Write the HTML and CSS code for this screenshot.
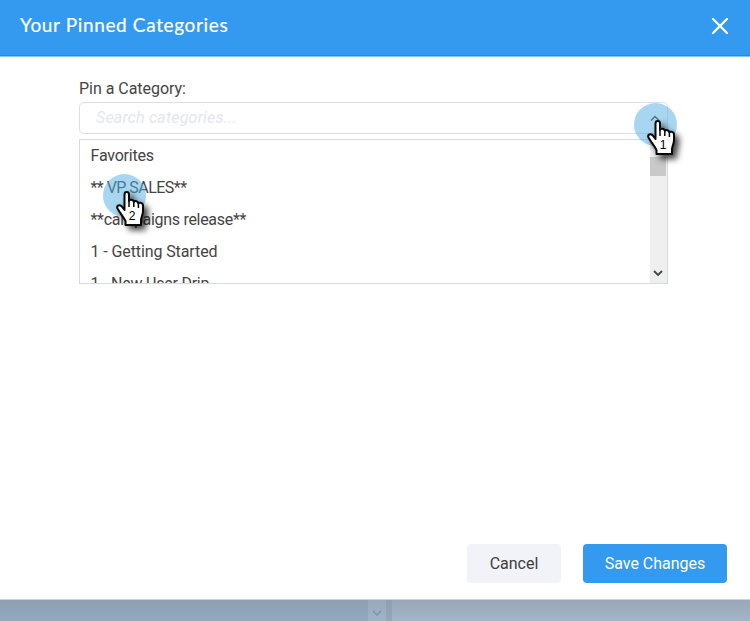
FILE: index.html
```html
<!DOCTYPE html>
<html lang="en">
<head>
<meta charset="utf-8">
<title>Your Pinned Categories</title>
<link rel="stylesheet" href="styles.css">
</head>
<body>
<svg class="defs" width="0" height="0" aria-hidden="true">
  <symbol id="hand" viewBox="0 0 30 36">
    <path d="M8.5 19V3.5C8.5 .3 13 .3 13 3.5V10C13.5 8.2 17.5 8.2 17.8 11C18.8 9.4 22 10 22.4 12.3C23.6 11 27 11.8 27 14.5V20C27 24 25 26.5 25 29V34H9.5V30C7.8 26.5 4 22 1.5 17.5C.2 14.6 3.5 13.2 5.5 15.2Z" fill="#fff" stroke="#080808" stroke-width="2" stroke-linejoin="round"/>
    <path d="M13 9V16M17.8 10.5V16M22.4 12V17" fill="none" stroke="#080808" stroke-width="1.5"/>
  </symbol>
</svg>
<section class="modal">
  <header class="header">
    <h1 class="title">Your Pinned Categories</h1>
    <svg class="close" width="18" height="18" viewBox="0 0 18 18"><path d="M2 2L16 16M16 2L2 16" fill="none" stroke="#fff" stroke-width="2.3" stroke-linecap="round"/></svg>
  </header>
  <main class="content">
    <div class="label"><span>Pin a Category:</span></div>
    <div class="search">
      <span class="placeholder">Search categories...</span>
      <svg width="10" height="7" viewBox="0 0 10 7"><path d="M1 5.5L5 1.5L9 5.5" fill="none" stroke="#444" stroke-width="1.5"/></svg>
      <div class="pointer pointer-one"><svg class="hand" width="30" height="36"><use href="#hand"/></svg><span class="number">1</span></div>
    </div>
    <div class="dropdown">
      <ul class="options">
        <li class="favorites">Favorites</li>
        <li class="sales">** VP SALES**</li>
        <li class="campaigns">**campaigns release**</li>
        <li class="getting">1 - Getting Started</li>
        <li class="drip">1 - New User Drip</li>
      </ul>
      <div class="scrollbar">
        <div class="thumb"></div>
        <svg width="10" height="7" viewBox="0 0 10 7"><path d="M1 1L5 5L9 1" fill="none" stroke="#444" stroke-width="1.8"/></svg>
      </div>
      <div class="pointer pointer-two"><svg class="hand" width="30" height="36"><use href="#hand"/></svg><span class="number">2</span></div>
    </div>
  </main>
  <footer class="footer">
    <button class="button cancel"><span>Cancel</span></button>
    <button class="button save"><span>Save Changes</span></button>
  </footer>
</section>
<div class="backdrop">
  <div class="left"></div>
  <div class="track"><svg width="10" height="7" viewBox="0 0 10 7"><path d="M1 1L5 5L9 1" fill="none" stroke="#8195a8" stroke-width="1.5"/></svg></div>
  <div class="gap"></div>
  <div class="right"></div>
</div>
</body>
</html>
```
FILE: styles.css
```css
* { box-sizing: border-box; }
body {
  margin: 0;
  width: 750px;
  height: 621px;
  overflow: hidden;
  display: flex;
  flex-direction: column;
  font: 16px/20px Roboto, "Liberation Sans", sans-serif;
  color: #444;
}
.defs { position: absolute; }
.modal {
  height: 600px;
  flex: none;
  display: flex;
  flex-direction: column;
  background: #fff;
  border-bottom: 1px solid #cbd5df;
}
.header {
  height: 57px;
  flex: none;
  display: flex;
  justify-content: space-between;
  align-items: flex-start;
  padding: 13px 21px 0 20px;
  background: #339aef;
  border-bottom: 1px solid #8bc5f6;
  box-shadow: inset 0 -1px #218ce7;
}
.title {
  margin: 0;
  font: 400 19px/24px Lato, sans-serif;
  letter-spacing: .64px;
  color: #fff;
  -webkit-text-stroke: .2px #fff;
}
.close { margin-top: 4px; }
.content { padding: 22px 82px 0 79px; flex: 1; }
.label { height: 20px; letter-spacing: -.03px; }
.search {
  position: relative;
  height: 32px;
  margin-top: 3px;
  padding: 0 7px 0 16px;
  display: flex;
  align-items: center;
  justify-content: space-between;
  border: 1px solid #dcdfeb;
  border-radius: 5px;
}
.placeholder { color: #e4e6ee; font-style: italic; letter-spacing: .2px; }
.dropdown {
  position: relative;
  height: 145px;
  margin-top: 5px;
  display: flex;
  justify-content: space-between;
  border: 1px solid #d5dae6;
}
.options {
  list-style: none;
  margin: 0;
  padding: 0 0 0 10.5px;
  overflow: hidden;
  flex: 1;
}
.options li { height: 32px; line-height: 32px; white-space: nowrap; }
.options .favorites { letter-spacing: -.2px; }
.options .sales { letter-spacing: -.53px; }
.options .campaigns { letter-spacing: -.3px; }
.options .getting { letter-spacing: -.1px; }
.options .drip { letter-spacing: -.22px; }
.scrollbar {
  width: 17px;
  padding: 17px 2px 6px 0;
  display: flex;
  flex-direction: column;
  justify-content: space-between;
  align-items: center;
  background: #efefef;
}
.thumb { width: 16px; height: 19px; background: #c9c9c9; }
.pointer {
  position: absolute;
  width: 43px;
  height: 43px;
  border-radius: 50%;
  background: rgba(82, 174, 226, .5);
  z-index: 2;
}
.pointer-one { left: 554px; top: 0; }
.pointer-two { left: 23px; top: 34px; }
.hand {
  position: absolute;
  left: 13px;
  top: 17px;
  overflow: visible;
  filter: drop-shadow(4px 4px 3px rgba(0, 0, 0, .75));
}
.number {
  position: absolute;
  left: 24px;
  top: 35px;
  width: 10px;
  font: 12px/14px "Liberation Sans", sans-serif;
  text-align: center;
  color: #000;
}
.footer {
  display: flex;
  justify-content: flex-end;
  gap: 22px;
  padding: 0 23px 16px;
}
.button {
  height: 39px;
  padding: 0;
  border: 0;
  border-radius: 4px;
  font: inherit;
}
.cancel { width: 94px; color: #3d3d3d; background: #f2f3f8; }
.save { width: 144px; color: #fff; background: #339aef; }
.backdrop { height: 21px; display: flex; background: linear-gradient(#98a8b8, #a5b5c7); }
.left { width: 368px; background: linear-gradient(#8c9fb2, #93a8be); }
.track { width: 18px; padding-top: 10px; display: flex; justify-content: center; align-items: flex-start; background: linear-gradient(#98a9ba, #a1b4c7); }
.gap { width: 6px; background: linear-gradient(#8c9fb2, #93a8be); }
.right { flex: 1; background: linear-gradient(#98a8b8, #a5b5c9); }
```
